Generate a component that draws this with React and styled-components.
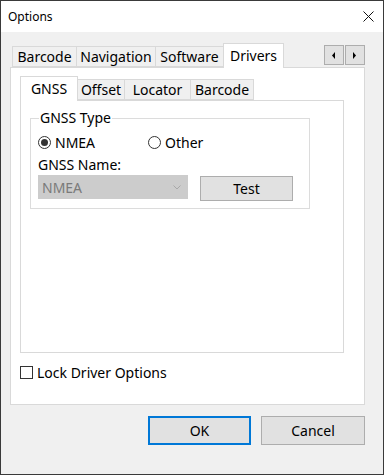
import React from "react";
import styled, { createGlobalStyle } from "styled-components";

const Global = createGlobalStyle`
  html, body { margin: 0; padding: 0; background: #ffffff; }
  * { box-sizing: border-box; }
`;

const FONT = `"Noto Sans", "Open Sans", sans-serif`;

const Window = styled.div`
  width: 384px;
  height: 475px;
  border: 1px solid #3a3a3a;
  display: flex;
  flex-direction: column;
  font-family: ${FONT};
  font-size: 14px;
  color: #000;
`;

const TitleBar = styled.div`
  height: 31px;
  flex: none;
  background: #ffffff;
  display: flex;
  align-items: center;
  justify-content: space-between;
  padding: 0 9px 0 7px;
`;

const Title = styled.span`
  font-size: 12px;
  line-height: 1;
`;

const Body = styled.div`
  flex: 1;
  background: #f0f0f0;
  padding: 11px 18px 0 9px;
  display: flex;
  flex-direction: column;
`;

const TabStrip = styled.div`
  display: flex;
  align-items: flex-end;
  height: 24px;
  padding-left: ${(p) => p.$indent}px;
  position: relative;
  z-index: 1;
`;

const Tab = styled.div`
  width: ${(p) => p.$w}px;
  height: ${(p) => (p.$active ? 25 : 21)}px;
  padding-bottom: ${(p) => (p.$active ? 2 : 0)}px;
  margin-left: -1px;
  margin-bottom: ${(p) => (p.$active ? -1 : 0)}px;
  border: 1px solid #d9d9d9;
  border-bottom: ${(p) => (p.$active ? "none" : "1px solid #d9d9d9")};
  background: ${(p) => (p.$active ? "#ffffff" : "#f0f0f0")};
  display: flex;
  align-items: center;
  justify-content: center;
  white-space: nowrap;
  position: relative;
  z-index: ${(p) => (p.$active ? 2 : 1)};
  &:first-child { margin-left: 0; }
`;

const Scroller = styled.div`
  margin-left: auto;
  align-self: flex-start;
  margin-top: 2px;
  display: flex;
  gap: 1px;
`;

const ScrollBtn = styled.div`
  width: 20px;
  height: 20px;
  background: #e1e1e1;
  border: 1px solid #adadad;
  display: flex;
  align-items: center;
  justify-content: center;
`;

const Panel = styled.div`
  background: #ffffff;
  border: 1px solid #d9d9d9;
  height: ${(p) => p.$h}px;
  padding: ${(p) => p.$pad};
  display: flex;
  flex-direction: column;
`;

const GroupBox = styled.fieldset`
  margin: 0;
  width: 280px;
  height: 99px;
  border: 1px solid #dcdcdc;
  padding: 2px 0 0 7px;
  display: flex;
  flex-direction: column;
`;

const Legend = styled.legend`
  padding: 0 1px;
  margin-left: 1px;
  line-height: 16px;
`;

const RadioRow = styled.div`
  display: flex;
  align-items: center;
  height: 20px;
  margin-top: 4px;
`;

const RadioItem = styled.label`
  display: flex;
  align-items: center;
  gap: 4px;
  width: ${(p) => p.$w}px;
`;

const RadioCircle = styled.span`
  width: 13px;
  height: 13px;
  border-radius: 50%;
  border: 1px solid #333333;
  display: flex;
  align-items: center;
  justify-content: center;
  &::after {
    content: "";
    width: 7px;
    height: 7px;
    border-radius: 50%;
    background: ${(p) => (p.$checked ? "#333333" : "transparent")};
  }
`;

const FieldLabel = styled.div`
  height: 20px;
  line-height: 20px;
  margin-top: 3px;
`;

const ControlRow = styled.div`
  display: flex;
  align-items: flex-start;
  gap: 12px;
`;

const Combo = styled.div`
  width: 150px;
  height: 24px;
  margin-top: 0px;
  background: #cccccc;
  border: 1px solid #cccccc;
  color: #7a7a7a;
  display: flex;
  align-items: center;
  justify-content: space-between;
  padding: 0 6px 0 3px;
`;

const Button = styled.div`
  width: ${(p) => p.$w}px;
  height: ${(p) => p.$h}px;
  margin-top: ${(p) => p.$top || 0}px;
  background: #e1e1e1;
  border: 1px solid ${(p) => (p.$default ? "#0078d7" : "#adadad")};
  box-shadow: ${(p) => (p.$default ? "inset 0 0 0 1px #0078d7" : "none")};
  display: flex;
  align-items: center;
  justify-content: center;
`;

const CheckRow = styled.label`
  display: flex;
  align-items: center;
  gap: 4px;
  margin-top: 10px;
`;

const CheckBox = styled.span`
  width: 13px;
  height: 13px;
  border: 1px solid #333333;
  background: #ffffff;
`;

const ButtonRow = styled.div`
  display: flex;
  justify-content: flex-end;
  gap: 10px;
  margin-top: 11px;
  margin-right: 0;
`;

export default function App() {
  return (
    <>
      <Global />
      <Window>
        <TitleBar>
          <Title>Options</Title>
          <svg width="11" height="11" viewBox="0 0 11 11">
            <path d="M0.5 0.5 L10.5 10.5 M10.5 0.5 L0.5 10.5" stroke="#111" strokeWidth="1" />
          </svg>
        </TitleBar>
        <Body>
          <TabStrip $indent={2}>
            <Tab $w={65}>Barcode</Tab>
            <Tab $w={80}>Navigation</Tab>
            <Tab $w={69}>Software</Tab>
            <Tab $w={61} $active>Drivers</Tab>
            <Scroller>
              <ScrollBtn>
                <svg width="4" height="7" viewBox="0 0 4 7"><path d="M3 0 L0 3.5 L3 7 Z" fill="#000" /></svg>
              </ScrollBtn>
              <ScrollBtn>
                <svg width="4" height="7" viewBox="0 0 4 7"><path d="M0 0 L3 3.5 L0 7 Z" fill="#000" /></svg>
              </ScrollBtn>
            </Scroller>
          </TabStrip>
          <Panel $h={338} $pad="8px 20px 0 9px">
            <TabStrip $indent={0}>
              <Tab $w={58} $active>GNSS</Tab>
              <Tab $w={48}>Offset</Tab>
              <Tab $w={67}>Locator</Tab>
              <Tab $w={64}>Barcode</Tab>
            </TabStrip>
            <Panel $h={253} $pad="9px 0 0 9px">
              <GroupBox>
                <Legend>GNSS Type</Legend>
                <RadioRow>
                  <RadioItem $w={110}>
                    <RadioCircle $checked />
                    NMEA
                  </RadioItem>
                  <RadioItem>
                    <RadioCircle />
                    Other
                  </RadioItem>
                </RadioRow>
                <FieldLabel>GNSS Name:</FieldLabel>
                <ControlRow>
                  <Combo>
                    NMEA
                    <svg width="8" height="5" viewBox="0 0 8 5"><path d="M0.5 0.5 L4 4 L7.5 0.5" stroke="#a8a8a8" fill="none" /></svg>
                  </Combo>
                  <Button $w={93} $h={25} $top={1}>Test</Button>
                </ControlRow>
              </GroupBox>
            </Panel>
            <CheckRow>
              <CheckBox />
              Lock Driver Options
            </CheckRow>
          </Panel>
          <ButtonRow>
            <Button $w={103} $h={29} $default>OK</Button>
            <Button $w={104} $h={29}>Cancel</Button>
          </ButtonRow>
        </Body>
      </Window>
    </>
  );
}
